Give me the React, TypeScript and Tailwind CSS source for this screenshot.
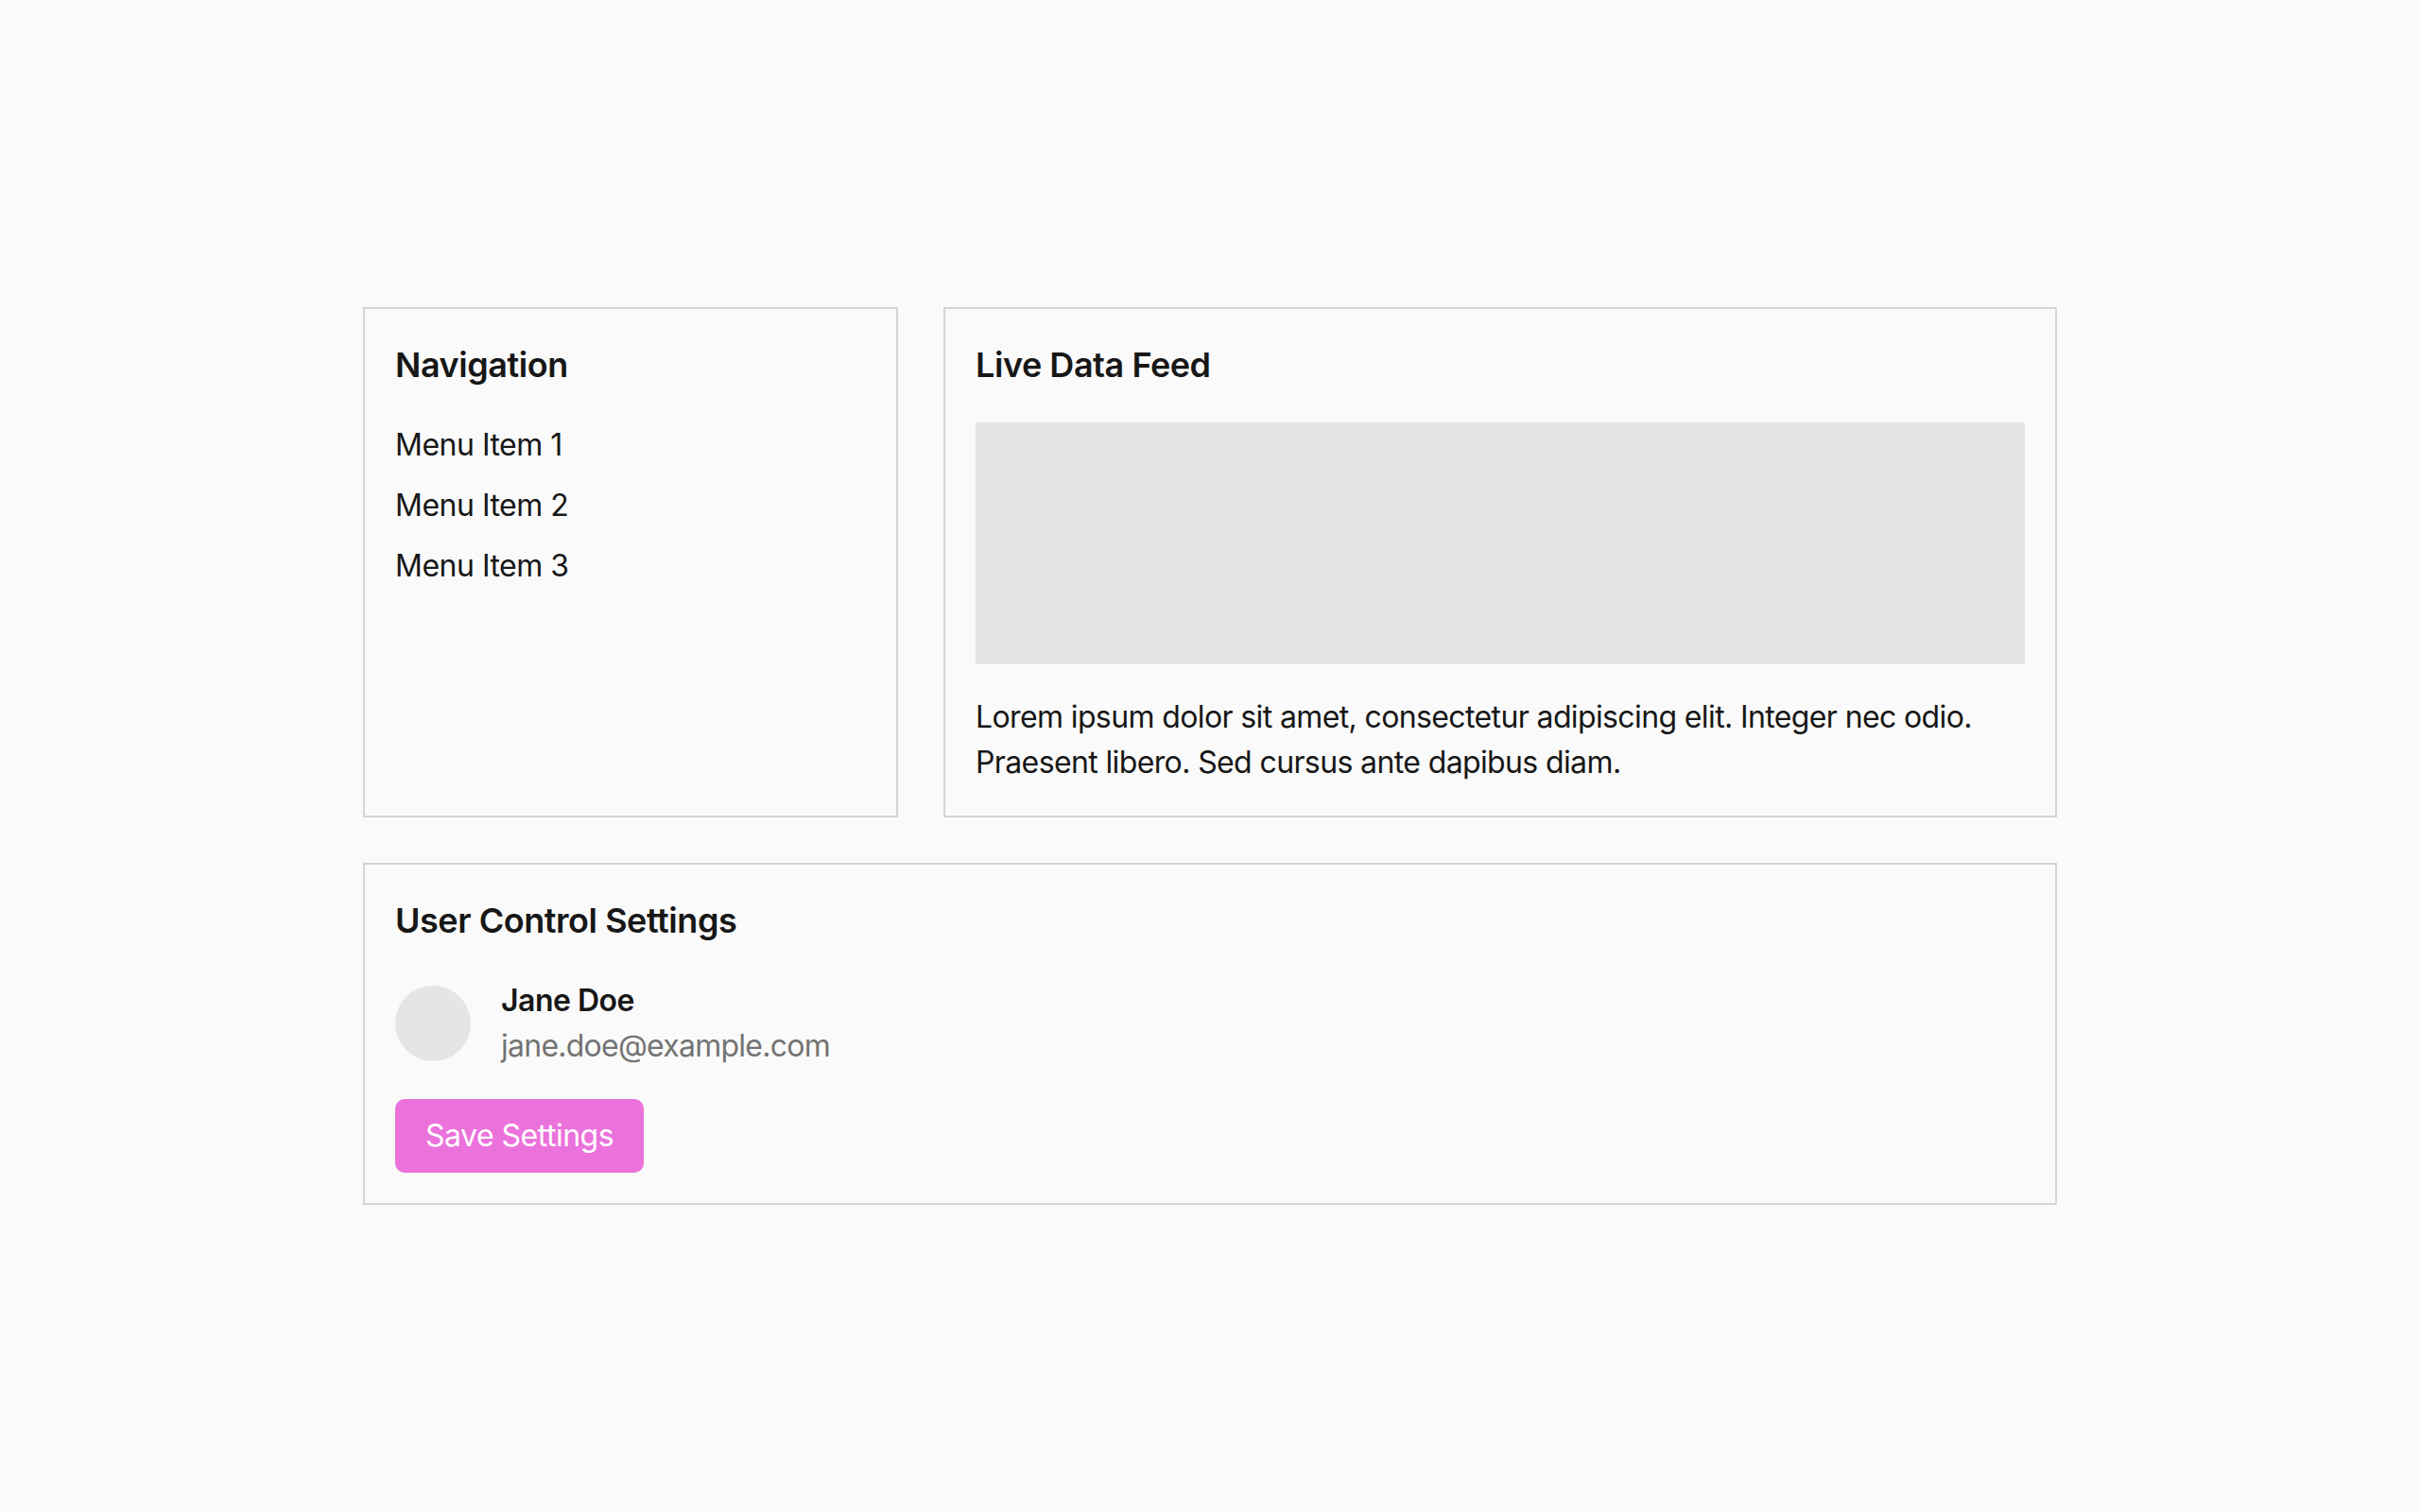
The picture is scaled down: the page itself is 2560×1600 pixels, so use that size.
const MENU = ["Menu Item 1", "Menu Item 2", "Menu Item 3"];

function Card({ title, className, children }: { title: string; className?: string; children: React.ReactNode }) {
  return (
    <section className={"border-2 border-[#d4d4d4] p-8 " + (className ?? "")}>
      <h2 className="text-[36px] leading-[54px] pb-[2px] font-semibold tracking-[-0.45px] text-[#171717] mb-8">{title}</h2>
      {children}
    </section>
  );
}

export default function App() {
  return (
    <div className="min-h-screen bg-[#fafafa] flex items-center justify-center font-['Inter','Noto_Sans',sans-serif] text-[#171717] tracking-[-0.5px]">
      <div className="w-[1792px] flex flex-col gap-12">
        <div className="flex gap-12">
          {/* sidebar */}
          <Card title="Navigation" className="w-[566px] shrink-0">
            <ul className="flex flex-col gap-4">
              {MENU.map((m) => (
                <li key={m} className="text-[32px] leading-[48px]">
                  {m}
                </li>
              ))}
            </ul>
          </Card>

          {/* feed */}
          <Card title="Live Data Feed" className="flex-1">
            <div className="h-[256px] bg-[#e5e5e5]" />
            <p className="mt-8 text-[32px] leading-[48px] tracking-[-0.62px]">
              Lorem ipsum dolor sit amet, consectetur adipiscing elit. Integer nec odio. Praesent libero. Sed cursus ante dapibus diam.
            </p>
          </Card>
        </div>

        {/* settings */}
        <Card title="User Control Settings">
          <div className="flex items-center gap-8">
            <div className="w-20 h-20 rounded-full bg-[#e5e5e5]" />
            <div className="flex flex-col">
              <span className="text-[32px] leading-[48px] font-semibold">Jane Doe</span>
              <span className="text-[32px] leading-[48px] tracking-[-0.75px] text-[#737373]">jane.doe@example.com</span>
            </div>
          </div>
          <button className="mt-8 bg-[#ec72db] text-white text-[32px] leading-[48px] px-8 py-[15px] rounded-[10px]">
            Save Settings
          </button>
        </Card>
      </div>
    </div>
  );
}
